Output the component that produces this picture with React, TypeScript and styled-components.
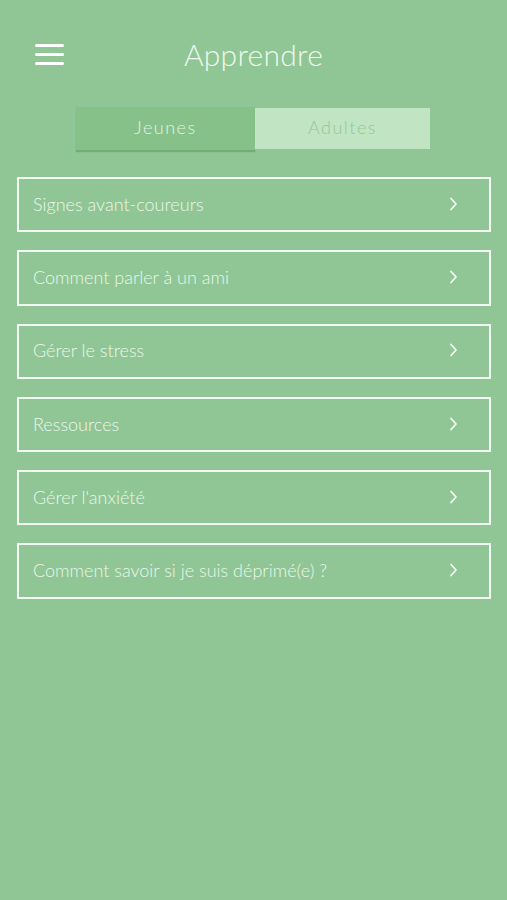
import React from "react";
import styled, { createGlobalStyle } from "styled-components";

const Global = createGlobalStyle`
  html, body { margin: 0; padding: 0; background: #90c695; }
  body { font-family: Lato, "Open Sans", sans-serif; }
`;

const Page = styled.div`
  width: 507px;
  min-height: 900px;
  background: #90c695;
  box-sizing: border-box;
  display: flex;
  flex-direction: column;
`;

const Header = styled.div`
  height: 110px;
  box-sizing: border-box;
  padding-top: 32px;
  display: grid;
  grid-template-columns: 100px 1fr 100px;
  align-items: start;
`;

const Burger = styled.div`
  padding-left: 35px;
  padding-top: 12px;
  display: flex;
  flex-direction: column;
  gap: 6px;
`;

const Bar = styled.span`
  display: block;
  width: 29px;
  height: 3px;
  border-radius: 2px;
  background: #ffffff;
`;

const Title = styled.h1`
  margin: 0;
  text-align: center;
  font-family: Lato, sans-serif;
  font-weight: 300;
  font-size: 30px;
  line-height: 44px;
  color: #eef8ee;
  letter-spacing: 0.3px;
`;

const Tabs = styled.div`
  display: flex;
  justify-content: center;
  align-items: center;
  margin-top: -3px;
  padding-right: 1px;
`;

const Tab = styled.div<{ $active?: boolean }>`
  width: ${(p) => (p.$active ? "179px" : "175px")};
  height: ${(p) => (p.$active ? "43px" : "41px")};
  box-sizing: border-box;
  display: flex;
  align-items: center;
  justify-content: center;
  font-family: Lato, sans-serif;
  font-weight: 300;
  font-size: 18px;
  letter-spacing: 1.5px;
  background: ${(p) => (p.$active ? "#86c18a" : "#c1e5c3")};
  color: ${(p) => (p.$active ? "#e3f3e3" : "#93c796")};
  box-shadow: ${(p) => (p.$active ? "0 2px 1px #74ab78" : "none")};
  padding-bottom: 4px;
`;

const List = styled.div`
  margin-top: 27px;
  padding: 0 16px 0 17px;
  display: flex;
  flex-direction: column;
  gap: 18px;
`;

const Item = styled.div`
  height: 55.3px;
  box-sizing: border-box;
  border: 2px solid #f4fbf4;
  display: flex;
  align-items: center;
  justify-content: space-between;
  padding: 0 31px 2px 14px;
`;

const Label = styled.span`
  font-family: Lato, sans-serif;
  font-weight: 300;
  font-size: 18px;
  color: #eaf6ea;
`;

const Chevron = () => (
  <svg width="9" height="16" viewBox="0 0 9 16">
    <path d="M2 2.5 L7 8 L2 13.5" fill="none" stroke="#f6fcf6" strokeWidth="1.7" strokeLinecap="round" strokeLinejoin="round" />
  </svg>
);

const items = [
  "Signes avant-coureurs",
  "Comment parler à un ami",
  "Gérer le stress",
  "Ressources",
  "Gérer l'anxiété",
  "Comment savoir si je suis déprimé(e) ?",
];

export default function App() {
  return (
    <>
      <Global />
      <Page>
        <Header>
          <Burger>
            <Bar />
            <Bar />
            <Bar />
          </Burger>
          <Title>Apprendre</Title>
          <div />
        </Header>
        <Tabs>
          <Tab $active>Jeunes</Tab>
          <Tab>Adultes</Tab>
        </Tabs>
        <List>
          {items.map((t) => (
            <Item key={t}>
              <Label>{t}</Label>
              <Chevron />
            </Item>
          ))}
        </List>
      </Page>
    </>
  );
}
